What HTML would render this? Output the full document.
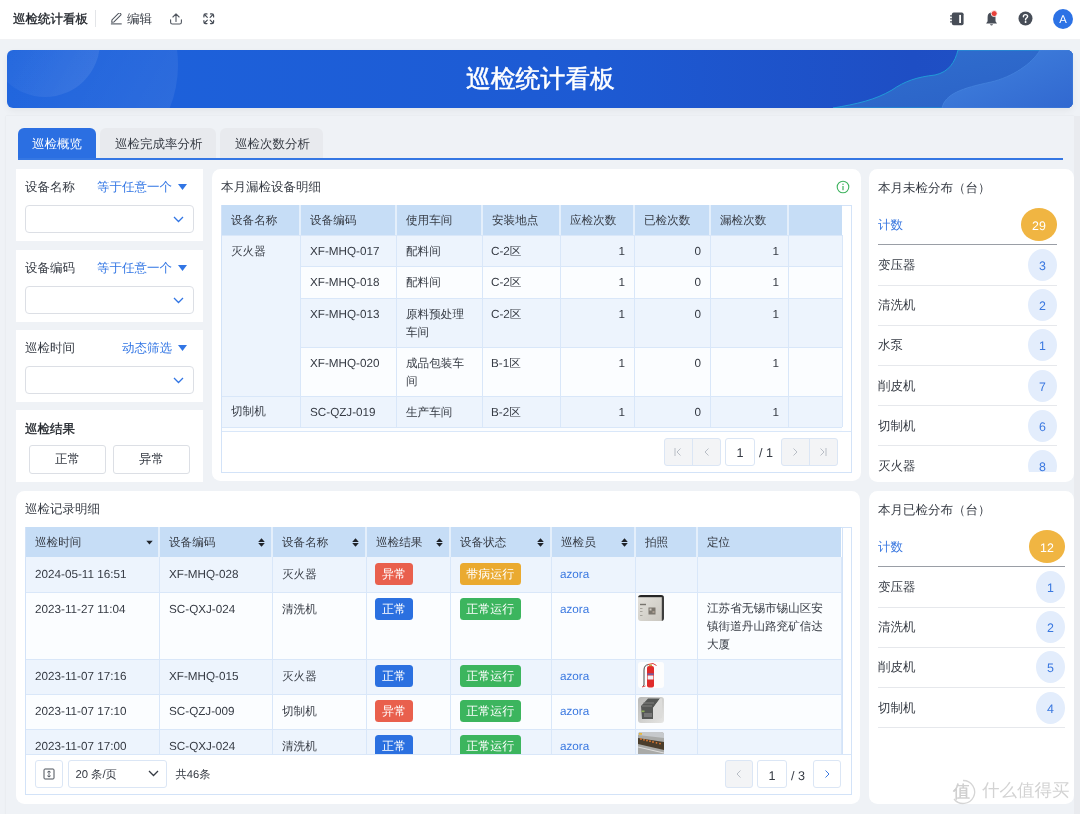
<!DOCTYPE html>
<html><head><meta charset="utf-8">
<style>
*{box-sizing:border-box;margin:0;padding:0}
html,body{width:1080px;height:814px;overflow:hidden}
body{background:#eff2f6;font-family:"Liberation Sans",sans-serif;text-rendering:geometricPrecision;color:#363b44;font-size:12px;position:relative}
.abs{position:absolute}
.t{position:absolute;white-space:nowrap;line-height:1}
.n{font-size:11.7px}
.panel{position:absolute;background:#fff;border-radius:8.5px}
.svg{position:absolute;line-height:0}
#root{position:absolute;left:0;top:0;width:1080px;height:814px;will-change:transform}
</style></head><body><div id="root">

<div class="abs" style="left:0px;top:0px;width:1080px;height:40px;background:#fff;border-bottom:1px solid #f1f2f4"></div>
<div class="t" style="left:13px;top:13px;font-size:12.5px;color:#1f2329;-webkit-text-stroke:0.35px #1f2329">巡检统计看板</div>
<div class="abs" style="left:95px;top:10px;width:1px;height:17px;background:#e3e5e8"></div>
<svg class="svg" style="left:110px;top:13px" width="12" height="12" viewBox="0 0 12 12"><path transform="translate(0.3,-0.6)" d="M1.7 7.5 L8.4 0.8 Q9.1 0.2 9.8 0.8 L10.4 1.4 Q11 2.1 10.4 2.8 L3.7 9.5 L1.4 9.9 Z" fill="none" stroke="#50565f" stroke-width="1.05" stroke-linejoin="round"/><path d="M0.9 10.9 H11.7" stroke="#50565f" stroke-width="1.1"/></svg>
<div class="t" style="left:127px;top:13px;font-size:12.5px;color:#363b44;">编辑</div>
<svg class="svg" style="left:170px;top:12.5px" width="12" height="12" viewBox="0 0 12 12"><path d="M0.6 6.8 V9.2 Q0.6 11 2.4 11 H9.6 Q11.4 11 11.4 9.2 V6.8 M6 8.4 V1.1 M2.9 4.0 L6 0.9 L9.1 4.0" fill="none" stroke="#50565f" stroke-width="1.1" stroke-linecap="round" stroke-linejoin="round"/></svg>
<svg class="svg" style="left:202.5px;top:12.8px" width="12" height="12" viewBox="0 0 12 12"><path d="M0.9 4.0 V2.6 Q0.9 0.9 2.6 0.9 H4.0 M7.5 0.9 H8.9 Q10.6 0.9 10.6 2.6 V4.0 M10.6 7.5 V8.9 Q10.6 10.6 8.9 10.6 H7.5 M4.0 10.6 H2.6 Q0.9 10.6 0.9 8.9 V7.5 M1.5 1.5 L4.3 4.3 M10 1.5 L7.2 4.3 M10 10 L7.2 7.2 M1.5 10 L4.3 7.2" fill="none" stroke="#474d57" stroke-width="1.2" stroke-linecap="round"/></svg>
<svg class="svg" style="left:950px;top:11.5px" width="14" height="14" viewBox="0 0 14 14"><rect x="1.9" y="0.4" width="11.7" height="12.8" rx="1.8" fill="#474d57"/><rect x="9.2" y="2.9" width="1.8" height="8.1" fill="#fff"/><path d="M0.4 3.9H2.5 M0.4 6.9H2.5 M0.4 9.9H2.5" stroke="#474d57" stroke-width="1.1" stroke-linecap="round"/></svg>
<svg class="svg" style="left:985px;top:10px" width="14" height="17" viewBox="0 0 14 17"><path d="M6.2 2.6 C3.6 2.8 2.6 4.9 2.6 7.4 V11.3 L1.1 13.6 H12 L10.5 11.3 V7.4 C10.5 4.9 9.2 2.7 6.8 2.6Z" fill="#474d57"/><path d="M4.9 14.2 Q6.5 16.6 8.1 14.2Z" fill="#474d57"/><circle cx="9.2" cy="3.6" r="3" fill="#e8403a" stroke="#fff" stroke-width="0.8"/></svg>
<svg class="svg" style="left:1018px;top:11px" width="15" height="15" viewBox="0 0 15 15"><circle cx="7.5" cy="7.5" r="7" fill="#474d57"/><path d="M5.4 5.7 C5.4 4.3 6.3 3.6 7.5 3.6 C8.8 3.6 9.6 4.4 9.6 5.5 C9.6 6.8 8 7.1 7.6 8.2 V8.9" fill="none" stroke="#fff" stroke-width="1.4" stroke-linecap="round"/><circle cx="7.6" cy="11" r="0.95" fill="#fff"/></svg>
<div class="abs" style="left:1053px;top:9px;width:20px;height:20px;background:#2c72e5;border-radius:50%"></div>
<div class="t" style="left:1053px;top:14.7px;font-size:11.3px;color:#fff;width:20px;text-align:center">A</div>
<div class="abs" style="left:7px;top:50px;width:1066px;height:58px;border-radius:6px;overflow:hidden;background:linear-gradient(90deg,#1d63dd 0%,#1d5ad3 55%,#1e4ec4 85%,#2152c6 100%);box-shadow:0 3px 7px rgba(0,0,0,0.05)">
 <svg class="svg" style="left:0;top:0" width="1066" height="58" viewBox="0 0 1066 58">
  <defs><linearGradient id="c1" x1="0" y1="0.2" x2="1" y2="0.8"><stop offset="0" stop-color="#fff" stop-opacity="0"/><stop offset="1" stop-color="#fff" stop-opacity="0.09"/></linearGradient><linearGradient id="c2" x1="0" y1="0" x2="1" y2="0.6"><stop offset="0.3" stop-color="#fff" stop-opacity="0"/><stop offset="1" stop-color="#fff" stop-opacity="0.07"/></linearGradient></defs>
  <circle cx="38" cy="-8" r="55" fill="url(#c1)"/>
  <circle cx="55" cy="15" r="116" fill="url(#c2)"/>
  <defs><linearGradient id="w1" x1="0" y1="0" x2="1" y2="1"><stop offset="0" stop-color="#3170cf"/><stop offset="1" stop-color="#2a60c6"/></linearGradient><linearGradient id="w2" x1="0" y1="0" x2="1" y2="1"><stop offset="0" stop-color="#4283de"/><stop offset="1" stop-color="#3168d0"/></linearGradient></defs>
  <path d="M826 58 C850 54 868 50 885 40 C898 31 910 27 928 25 C942 22 948 12 951 0 H1066 V58Z" fill="url(#w1)" stroke="#20a2d9" stroke-width="0.9"/>
  <path d="M935 58 C938 44 955 38 984 32 C1005 27 1025 14 1033 0 H1066 V58Z" fill="url(#w2)" stroke="#4a8ae0" stroke-width="0.6"/>
 </svg>
</div>
<div class="t" style="left:466px;top:68px;font-size:24.8px;color:#fff;-webkit-text-stroke:0.5px #fff">巡检统计看板</div>
<div class="abs" style="left:6px;top:116px;width:1068px;height:700px;background:#eff2f6;box-shadow:0 0 2px rgba(0,0,0,0.07)"></div>
<div class="abs" style="left:1074px;top:116px;width:6px;height:698px;background:#e9ebef"></div>
<div class="abs" style="left:18px;top:128px;width:78px;height:30px;background:#2b6fe2;border-radius:6px 6px 0 0"></div>
<div class="t" style="left:32px;top:138px;font-size:12.5px;color:#fff;">巡检概览</div>
<div class="abs" style="left:100px;top:128px;width:116px;height:30px;background:#e8eaee;border-radius:6px 6px 0 0"></div>
<div class="t" style="left:115px;top:138px;font-size:12.5px;color:#363b44;">巡检完成率分析</div>
<div class="abs" style="left:220px;top:128px;width:103px;height:30px;background:#e8eaee;border-radius:6px 6px 0 0"></div>
<div class="t" style="left:235px;top:138px;font-size:12.5px;color:#363b44;">巡检次数分析</div>
<div class="abs" style="left:18px;top:158px;width:1045px;height:2px;background:#3577e3"></div>
<div class="abs" style="left:16px;top:169px;width:187px;height:72px;background:#fff"></div>
<div class="t" style="left:25px;top:181px;font-size:12.5px;color:#363b44;">设备名称</div>
<div class="t" style="left:97px;top:181px;font-size:12.5px;color:#3175e4;">等于任意一个</div>
<div class="svg" style="left:178px;top:184px"><svg width="9" height="6" viewBox="0 0 9 6"><path d="M0 0 H9 L4.5 6Z" fill="#3175e4"/></svg></div>
<div class="abs" style="left:25px;top:205px;width:169px;height:28px;background:#fff;border:1px solid #dcdfe5;border-radius:4px"></div>
<div class="svg" style="left:173px;top:216px"><svg width="11" height="7" viewBox="0 0 11 7"><path d="M1 1 L5.5 5.5 L10 1" fill="none" stroke="#3175e4" stroke-width="1.3"/></svg></div>
<div class="abs" style="left:16px;top:249.5px;width:187px;height:72px;background:#fff"></div>
<div class="t" style="left:25px;top:261.5px;font-size:12.5px;color:#363b44;">设备编码</div>
<div class="t" style="left:97px;top:261.5px;font-size:12.5px;color:#3175e4;">等于任意一个</div>
<div class="svg" style="left:178px;top:264.5px"><svg width="9" height="6" viewBox="0 0 9 6"><path d="M0 0 H9 L4.5 6Z" fill="#3175e4"/></svg></div>
<div class="abs" style="left:25px;top:285.5px;width:169px;height:28px;background:#fff;border:1px solid #dcdfe5;border-radius:4px"></div>
<div class="svg" style="left:173px;top:296.5px"><svg width="11" height="7" viewBox="0 0 11 7"><path d="M1 1 L5.5 5.5 L10 1" fill="none" stroke="#3175e4" stroke-width="1.3"/></svg></div>
<div class="abs" style="left:16px;top:330px;width:187px;height:72px;background:#fff"></div>
<div class="t" style="left:25px;top:342px;font-size:12.5px;color:#363b44;">巡检时间</div>
<div class="t" style="left:122px;top:342px;font-size:12.5px;color:#3175e4;">动态筛选</div>
<div class="svg" style="left:178px;top:345px"><svg width="9" height="6" viewBox="0 0 9 6"><path d="M0 0 H9 L4.5 6Z" fill="#3175e4"/></svg></div>
<div class="abs" style="left:25px;top:366px;width:169px;height:28px;background:#fff;border:1px solid #dcdfe5;border-radius:4px"></div>
<div class="svg" style="left:173px;top:377px"><svg width="11" height="7" viewBox="0 0 11 7"><path d="M1 1 L5.5 5.5 L10 1" fill="none" stroke="#3175e4" stroke-width="1.3"/></svg></div>
<div class="abs" style="left:16px;top:410px;width:187px;height:72px;background:#fff"></div>
<div class="t" style="left:25px;top:423px;font-size:12.5px;color:#1f2329;-webkit-text-stroke:0.35px #1f2329">巡检结果</div>
<div class="abs" style="left:29px;top:445px;width:77px;height:29px;background:#fff;border:1px solid #dcdfe5;border-radius:3px"></div>
<div class="t" style="left:29px;top:453px;font-size:12.5px;color:#363b44;width:77px;text-align:center">正常</div>
<div class="abs" style="left:113px;top:445px;width:77px;height:29px;background:#fff;border:1px solid #dcdfe5;border-radius:3px"></div>
<div class="t" style="left:113px;top:453px;font-size:12.5px;color:#363b44;width:77px;text-align:center">异常</div>
<div class="panel" style="left:212px;top:169px;width:649px;height:312px"></div>
<div class="panel" style="left:869px;top:169px;width:205px;height:313px"></div>
<div class="panel" style="left:16px;top:491px;width:844px;height:313px"></div>
<div class="panel" style="left:869px;top:491px;width:205px;height:313px"></div>
<div class="t" style="left:221px;top:181px;font-size:12.5px;color:#363b44;">本月漏检设备明细</div>
<svg class="svg" style="left:836px;top:180px" width="14" height="14" viewBox="0 0 14 14"><circle cx="7" cy="7" r="5.8" fill="none" stroke="#3fb35f" stroke-width="1.1"/><rect x="6.4" y="6" width="1.2" height="4.2" fill="#3fb35f"/><circle cx="7" cy="4.3" r="0.75" fill="#3fb35f"/></svg>
<div class="abs" style="left:221px;top:205px;width:621px;height:30px;background:#c6ddf6"></div>
<div class="t" style="left:231px;top:215px;font-size:11.6px;color:#363b44;">设备名称</div>
<div class="t" style="left:310px;top:215px;font-size:11.6px;color:#363b44;">设备编码</div>
<div class="t" style="left:406px;top:215px;font-size:11.6px;color:#363b44;">使用车间</div>
<div class="t" style="left:492px;top:215px;font-size:11.6px;color:#363b44;">安装地点</div>
<div class="t" style="left:570px;top:215px;font-size:11.6px;color:#363b44;">应检次数</div>
<div class="t" style="left:644px;top:215px;font-size:11.6px;color:#363b44;">已检次数</div>
<div class="t" style="left:720px;top:215px;font-size:11.6px;color:#363b44;">漏检次数</div>
<div class="abs" style="left:300px;top:235px;width:542px;height:31px;background:#edf4fd"></div>
<div class="abs" style="left:300px;top:266px;width:542px;height:32px;background:#fbfdff"></div>
<div class="abs" style="left:300px;top:298px;width:542px;height:49px;background:#edf4fd"></div>
<div class="abs" style="left:300px;top:347px;width:542px;height:49px;background:#fbfdff"></div>
<div class="abs" style="left:300px;top:396px;width:542px;height:31px;background:#edf4fd"></div>
<div class="abs" style="left:300px;top:427px;width:542px;height:4px;background:#fbfdff"></div>
<div class="abs" style="left:221px;top:235px;width:79px;height:161px;background:#edf4fd"></div>
<div class="abs" style="left:221px;top:396px;width:79px;height:31px;background:#edf4fd"></div>
<div class="abs" style="left:221px;top:427px;width:79px;height:4px;background:#fbfdff"></div>
<div class="t" style="left:231px;top:246px;font-size:11.6px;color:#363b44;">灭火器</div>
<div class="t" style="left:231px;top:406px;font-size:11.6px;color:#363b44;">切制机</div>
<div class="t" style="left:310px;top:246px;font-size:11.7px;color:#363b44;"><span class="n">XF-MHQ-017</span></div>
<div class="t" style="left:406px;top:243.3px;font-size:11.6px;line-height:17.3px;white-space:nowrap">配料间</div>
<div class="t" style="left:491px;top:246px;font-size:11.6px;color:#363b44;"><span class="n">C-2</span>区</div>
<div class="t" style="left:560px;top:246px;font-size:11.7px;color:#363b44;width:74px;text-align:right;padding-right:9px"><span class="n">1</span></div>
<div class="t" style="left:634px;top:246px;font-size:11.7px;color:#363b44;width:76px;text-align:right;padding-right:9px"><span class="n">0</span></div>
<div class="t" style="left:710px;top:246px;font-size:11.7px;color:#363b44;width:78px;text-align:right;padding-right:9px"><span class="n">1</span></div>
<div class="t" style="left:310px;top:277px;font-size:11.7px;color:#363b44;"><span class="n">XF-MHQ-018</span></div>
<div class="t" style="left:406px;top:274.3px;font-size:11.6px;line-height:17.3px;white-space:nowrap">配料间</div>
<div class="t" style="left:491px;top:277px;font-size:11.6px;color:#363b44;"><span class="n">C-2</span>区</div>
<div class="t" style="left:560px;top:277px;font-size:11.7px;color:#363b44;width:74px;text-align:right;padding-right:9px"><span class="n">1</span></div>
<div class="t" style="left:634px;top:277px;font-size:11.7px;color:#363b44;width:76px;text-align:right;padding-right:9px"><span class="n">0</span></div>
<div class="t" style="left:710px;top:277px;font-size:11.7px;color:#363b44;width:78px;text-align:right;padding-right:9px"><span class="n">1</span></div>
<div class="t" style="left:310px;top:309px;font-size:11.7px;color:#363b44;"><span class="n">XF-MHQ-013</span></div>
<div class="t" style="left:406px;top:306.3px;font-size:11.6px;line-height:17.3px;white-space:nowrap">原料预处理<br>车间</div>
<div class="t" style="left:491px;top:309px;font-size:11.6px;color:#363b44;"><span class="n">C-2</span>区</div>
<div class="t" style="left:560px;top:309px;font-size:11.7px;color:#363b44;width:74px;text-align:right;padding-right:9px"><span class="n">1</span></div>
<div class="t" style="left:634px;top:309px;font-size:11.7px;color:#363b44;width:76px;text-align:right;padding-right:9px"><span class="n">0</span></div>
<div class="t" style="left:710px;top:309px;font-size:11.7px;color:#363b44;width:78px;text-align:right;padding-right:9px"><span class="n">1</span></div>
<div class="t" style="left:310px;top:358px;font-size:11.7px;color:#363b44;"><span class="n">XF-MHQ-020</span></div>
<div class="t" style="left:406px;top:355.3px;font-size:11.6px;line-height:17.3px;white-space:nowrap">成品包装车<br>间</div>
<div class="t" style="left:491px;top:358px;font-size:11.6px;color:#363b44;"><span class="n">B-1</span>区</div>
<div class="t" style="left:560px;top:358px;font-size:11.7px;color:#363b44;width:74px;text-align:right;padding-right:9px"><span class="n">1</span></div>
<div class="t" style="left:634px;top:358px;font-size:11.7px;color:#363b44;width:76px;text-align:right;padding-right:9px"><span class="n">0</span></div>
<div class="t" style="left:710px;top:358px;font-size:11.7px;color:#363b44;width:78px;text-align:right;padding-right:9px"><span class="n">1</span></div>
<div class="t" style="left:310px;top:407px;font-size:11.7px;color:#363b44;"><span class="n">SC-QZJ-019</span></div>
<div class="t" style="left:406px;top:404.3px;font-size:11.6px;line-height:17.3px;white-space:nowrap">生产车间</div>
<div class="t" style="left:491px;top:407px;font-size:11.6px;color:#363b44;"><span class="n">B-2</span>区</div>
<div class="t" style="left:560px;top:407px;font-size:11.7px;color:#363b44;width:74px;text-align:right;padding-right:9px"><span class="n">1</span></div>
<div class="t" style="left:634px;top:407px;font-size:11.7px;color:#363b44;width:76px;text-align:right;padding-right:9px"><span class="n">0</span></div>
<div class="t" style="left:710px;top:407px;font-size:11.7px;color:#363b44;width:78px;text-align:right;padding-right:9px"><span class="n">1</span></div>
<div class="abs" style="left:842px;top:205px;width:10px;height:1px;background:#d3e3f8"></div>
<div class="abs" style="left:299px;top:205px;width:2px;height:30px;background:#e4effb"></div>
<div class="abs" style="left:299.5px;top:235px;width:1px;height:192px;background:#d9e7f9"></div>
<div class="abs" style="left:395px;top:205px;width:2px;height:30px;background:#e4effb"></div>
<div class="abs" style="left:395.5px;top:235px;width:1px;height:192px;background:#d9e7f9"></div>
<div class="abs" style="left:481px;top:205px;width:2px;height:30px;background:#e4effb"></div>
<div class="abs" style="left:481.5px;top:235px;width:1px;height:192px;background:#d9e7f9"></div>
<div class="abs" style="left:559px;top:205px;width:2px;height:30px;background:#e4effb"></div>
<div class="abs" style="left:559.5px;top:235px;width:1px;height:192px;background:#d9e7f9"></div>
<div class="abs" style="left:633px;top:205px;width:2px;height:30px;background:#e4effb"></div>
<div class="abs" style="left:633.5px;top:235px;width:1px;height:192px;background:#d9e7f9"></div>
<div class="abs" style="left:709px;top:205px;width:2px;height:30px;background:#e4effb"></div>
<div class="abs" style="left:709.5px;top:235px;width:1px;height:192px;background:#d9e7f9"></div>
<div class="abs" style="left:787px;top:205px;width:2px;height:30px;background:#e4effb"></div>
<div class="abs" style="left:787.5px;top:235px;width:1px;height:192px;background:#d9e7f9"></div>
<div class="abs" style="left:841.5px;top:235px;width:1px;height:192px;background:#d9e7f9"></div>
<div class="abs" style="left:221px;top:234.5px;width:621px;height:1px;background:#d9e7f9"></div>
<div class="abs" style="left:300px;top:265.5px;width:542px;height:1px;background:#d9e7f9"></div>
<div class="abs" style="left:300px;top:297.5px;width:542px;height:1px;background:#d9e7f9"></div>
<div class="abs" style="left:300px;top:346.5px;width:542px;height:1px;background:#d9e7f9"></div>
<div class="abs" style="left:221px;top:395.5px;width:621px;height:1px;background:#d9e7f9"></div>
<div class="abs" style="left:221px;top:426.5px;width:621px;height:1px;background:#d9e7f9"></div>
<div class="abs" style="left:221px;top:430.5px;width:631px;height:1px;background:#d9e7f9"></div>
<div class="abs" style="left:221px;top:205px;width:631px;height:268px;border:1px solid #d3e3f8;border-top:none;background:transparent"></div>
<div class="abs" style="left:221px;top:205px;width:1px;height:268px;background:#d3e3f8"></div>
<div class="abs" style="left:664px;top:438px;width:57px;height:28px;background:#f3f4f6;border:1px solid #dbe6f5;border-radius:3px"></div>
<div class="abs" style="left:692px;top:439px;width:1px;height:26px;background:#dbe6f5"></div>
<div class="abs" style="left:781px;top:438px;width:57px;height:28px;background:#f3f4f6;border:1px solid #dbe6f5;border-radius:3px"></div>
<div class="abs" style="left:809px;top:439px;width:1px;height:26px;background:#dbe6f5"></div>
<div class="abs" style="left:725px;top:438px;width:30px;height:28px;background:#fff;border:1px solid #dbe6f5;border-radius:3px"></div>
<div class="t" style="left:725px;top:447px;font-size:12.6px;color:#363b44;width:30px;text-align:center"><span>1</span></div>
<div class="t" style="left:759px;top:447px;font-size:12.6px;color:#363b44;"><span>/ 1</span></div>
<svg class="svg" style="left:673px;top:447px" width="10" height="10" viewBox="0 0 10 10"><path d="M2 1V9 M7.5 1.5 L4 5 L7.5 8.5" fill="none" stroke="#b9bec6" stroke-width="1"/></svg>
<svg class="svg" style="left:702px;top:447px" width="10" height="10" viewBox="0 0 10 10"><path d="M6.5 1.5 L3 5 L6.5 8.5" fill="none" stroke="#b9bec6" stroke-width="1"/></svg>
<svg class="svg" style="left:790px;top:447px" width="10" height="10" viewBox="0 0 10 10"><path d="M3.5 1.5 L7 5 L3.5 8.5" fill="none" stroke="#b9bec6" stroke-width="1"/></svg>
<svg class="svg" style="left:818px;top:447px" width="10" height="10" viewBox="0 0 10 10"><path d="M8 1V9 M2.5 1.5 L6 5 L2.5 8.5" fill="none" stroke="#b9bec6" stroke-width="1"/></svg>
<div class="t" style="left:878px;top:182px;font-size:12.5px;color:#363b44;">本月未检分布（台）</div>
<div class="t" style="left:878px;top:219px;font-size:12.5px;color:#3a78e0;">计数</div>
<div class="abs" style="left:1021px;top:208px;width:36px;height:32.5px;background:#f0b542;border-radius:50%"></div>
<div class="t" style="left:1021px;top:219.5px;font-size:12.4px;color:#fff;width:36px;text-align:center"><span>29</span></div>
<div class="abs" style="left:878px;top:244px;width:179px;height:1px;background:#9a9ea6"></div>
<div class="abs" style="left:870px;top:245px;width:200px;height:227px;overflow:hidden">
<div class="t" style="left:8px;top:14.0px;font-size:12.5px;color:#363b44">变压器</div>
<div class="abs" style="left:158px;top:4.0px;width:29px;height:32px;background:#e3edfc;border-radius:50%"></div>
<div class="t" style="left:158px;top:15.0px;width:29px;text-align:center;font-size:12.4px;color:#3a78e0">3</div>
<div class="abs" style="left:8px;top:39.5px;width:179px;height:1px;background:#e6e8ec"></div>
<div class="t" style="left:8px;top:54.2px;font-size:12.5px;color:#363b44">清洗机</div>
<div class="abs" style="left:158px;top:44.2px;width:29px;height:32px;background:#e3edfc;border-radius:50%"></div>
<div class="t" style="left:158px;top:55.2px;width:29px;text-align:center;font-size:12.4px;color:#3a78e0">2</div>
<div class="abs" style="left:8px;top:79.7px;width:179px;height:1px;background:#e6e8ec"></div>
<div class="t" style="left:8px;top:94.4px;font-size:12.5px;color:#363b44">水泵</div>
<div class="abs" style="left:158px;top:84.4px;width:29px;height:32px;background:#e3edfc;border-radius:50%"></div>
<div class="t" style="left:158px;top:95.4px;width:29px;text-align:center;font-size:12.4px;color:#3a78e0">1</div>
<div class="abs" style="left:8px;top:119.9px;width:179px;height:1px;background:#e6e8ec"></div>
<div class="t" style="left:8px;top:134.60000000000002px;font-size:12.5px;color:#363b44">削皮机</div>
<div class="abs" style="left:158px;top:124.60000000000001px;width:29px;height:32px;background:#e3edfc;border-radius:50%"></div>
<div class="t" style="left:158px;top:135.60000000000002px;width:29px;text-align:center;font-size:12.4px;color:#3a78e0">7</div>
<div class="abs" style="left:8px;top:160.10000000000002px;width:179px;height:1px;background:#e6e8ec"></div>
<div class="t" style="left:8px;top:174.8px;font-size:12.5px;color:#363b44">切制机</div>
<div class="abs" style="left:158px;top:164.8px;width:29px;height:32px;background:#e3edfc;border-radius:50%"></div>
<div class="t" style="left:158px;top:175.8px;width:29px;text-align:center;font-size:12.4px;color:#3a78e0">6</div>
<div class="abs" style="left:8px;top:200.3px;width:179px;height:1px;background:#e6e8ec"></div>
<div class="t" style="left:8px;top:215.0px;font-size:12.5px;color:#363b44">灭火器</div>
<div class="abs" style="left:158px;top:205.0px;width:29px;height:32px;background:#e3edfc;border-radius:50%"></div>
<div class="t" style="left:158px;top:216.0px;width:29px;text-align:center;font-size:12.4px;color:#3a78e0">8</div>
<div class="abs" style="left:8px;top:240.5px;width:179px;height:1px;background:#e6e8ec"></div>
</div>
<div class="t" style="left:878px;top:504px;font-size:12.5px;color:#363b44;">本月已检分布（台）</div>
<div class="t" style="left:878px;top:541px;font-size:12.5px;color:#3a78e0;">计数</div>
<div class="abs" style="left:1029px;top:530px;width:36px;height:32.5px;background:#f0b542;border-radius:50%"></div>
<div class="t" style="left:1029px;top:541.5px;font-size:12.4px;color:#fff;width:36px;text-align:center"><span>12</span></div>
<div class="abs" style="left:878px;top:566px;width:187px;height:1px;background:#9a9ea6"></div>
<div class="abs" style="left:870px;top:567px;width:200px;height:233px;overflow:hidden">
<div class="t" style="left:8px;top:14.0px;font-size:12.5px;color:#363b44">变压器</div>
<div class="abs" style="left:166px;top:4.0px;width:29px;height:32px;background:#e3edfc;border-radius:50%"></div>
<div class="t" style="left:166px;top:15.0px;width:29px;text-align:center;font-size:12.4px;color:#3a78e0">1</div>
<div class="abs" style="left:8px;top:39.5px;width:187px;height:1px;background:#e6e8ec"></div>
<div class="t" style="left:8px;top:54.2px;font-size:12.5px;color:#363b44">清洗机</div>
<div class="abs" style="left:166px;top:44.2px;width:29px;height:32px;background:#e3edfc;border-radius:50%"></div>
<div class="t" style="left:166px;top:55.2px;width:29px;text-align:center;font-size:12.4px;color:#3a78e0">2</div>
<div class="abs" style="left:8px;top:79.7px;width:187px;height:1px;background:#e6e8ec"></div>
<div class="t" style="left:8px;top:94.4px;font-size:12.5px;color:#363b44">削皮机</div>
<div class="abs" style="left:166px;top:84.4px;width:29px;height:32px;background:#e3edfc;border-radius:50%"></div>
<div class="t" style="left:166px;top:95.4px;width:29px;text-align:center;font-size:12.4px;color:#3a78e0">5</div>
<div class="abs" style="left:8px;top:119.9px;width:187px;height:1px;background:#e6e8ec"></div>
<div class="t" style="left:8px;top:134.60000000000002px;font-size:12.5px;color:#363b44">切制机</div>
<div class="abs" style="left:166px;top:124.60000000000001px;width:29px;height:32px;background:#e3edfc;border-radius:50%"></div>
<div class="t" style="left:166px;top:135.60000000000002px;width:29px;text-align:center;font-size:12.4px;color:#3a78e0">4</div>
<div class="abs" style="left:8px;top:160.10000000000002px;width:187px;height:1px;background:#e6e8ec"></div>
</div>
<div class="t" style="left:25px;top:503px;font-size:12.5px;color:#363b44;">巡检记录明细</div>
<div class="abs" style="left:25px;top:527px;width:816px;height:30px;background:#c6ddf6"></div>
<div class="t" style="left:35px;top:537px;font-size:11.6px;color:#363b44;">巡检时间</div>
<div class="t" style="left:169px;top:537px;font-size:11.6px;color:#363b44;">设备编码</div>
<div class="t" style="left:282px;top:537px;font-size:11.6px;color:#363b44;">设备名称</div>
<div class="t" style="left:376px;top:537px;font-size:11.6px;color:#363b44;">巡检结果</div>
<div class="t" style="left:460px;top:537px;font-size:11.6px;color:#363b44;">设备状态</div>
<div class="t" style="left:561px;top:537px;font-size:11.6px;color:#363b44;">巡检员</div>
<div class="t" style="left:645px;top:537px;font-size:11.6px;color:#363b44;">拍照</div>
<div class="t" style="left:707px;top:537px;font-size:11.6px;color:#363b44;">定位</div>
<svg class="svg" style="left:258px;top:537.8px" width="7" height="9" viewBox="0 0 7 9"><path d="M0.2 3.9 L3.5 0.2 L6.8 3.9Z M0.2 5.0 L3.5 8.7 L6.8 5.0Z" fill="#1f2329"/></svg>
<svg class="svg" style="left:352px;top:537.8px" width="7" height="9" viewBox="0 0 7 9"><path d="M0.2 3.9 L3.5 0.2 L6.8 3.9Z M0.2 5.0 L3.5 8.7 L6.8 5.0Z" fill="#1f2329"/></svg>
<svg class="svg" style="left:436px;top:537.8px" width="7" height="9" viewBox="0 0 7 9"><path d="M0.2 3.9 L3.5 0.2 L6.8 3.9Z M0.2 5.0 L3.5 8.7 L6.8 5.0Z" fill="#1f2329"/></svg>
<svg class="svg" style="left:537px;top:537.8px" width="7" height="9" viewBox="0 0 7 9"><path d="M0.2 3.9 L3.5 0.2 L6.8 3.9Z M0.2 5.0 L3.5 8.7 L6.8 5.0Z" fill="#1f2329"/></svg>
<svg class="svg" style="left:621px;top:537.8px" width="7" height="9" viewBox="0 0 7 9"><path d="M0.2 3.9 L3.5 0.2 L6.8 3.9Z M0.2 5.0 L3.5 8.7 L6.8 5.0Z" fill="#1f2329"/></svg>
<svg class="svg" style="left:146px;top:540px" width="7" height="6" viewBox="0 0 7 6"><path d="M0.3 0.8 H6.7 L3.5 4.6Z" fill="#1f2329"/></svg>
<div class="abs" style="left:25px;top:557px;width:816px;height:197px;overflow:hidden">
<div class="abs" style="left:0;top:0px;width:816px;height:35px;background:#edf4fd"></div>
<div class="t" style="left:10px;top:12px;font-size:11.7px">2024-05-11 16:51</div>
<div class="t" style="left:144px;top:12px;font-size:11.7px">XF-MHQ-028</div>
<div class="t" style="left:257px;top:12px;font-size:11.6px">灭火器</div>
<div class="t" style="left:350.3px;top:6px;height:21.5px;line-height:23.6px;padding:0 6.8px;border-radius:3.5px;background:#e9604d;color:#fff;font-size:12px">异常</div>
<div class="t" style="left:434.5px;top:6px;height:21.5px;line-height:23.6px;padding:0 6.8px;border-radius:3.5px;background:#eaaa30;color:#fff;font-size:12px">带病运行</div>
<div class="t" style="left:535px;top:12px;font-size:11.7px;color:#3a78e0">azora</div>
<div class="abs" style="left:0;top:35px;width:816px;height:67px;background:#fbfdff"></div>
<div class="t" style="left:10px;top:47px;font-size:11.7px">2023-11-27 11:04</div>
<div class="t" style="left:144px;top:47px;font-size:11.7px">SC-QXJ-024</div>
<div class="t" style="left:257px;top:47px;font-size:11.6px">清洗机</div>
<div class="t" style="left:350.3px;top:41px;height:21.5px;line-height:23.6px;padding:0 6.8px;border-radius:3.5px;background:#2b70e0;color:#fff;font-size:12px">正常</div>
<div class="t" style="left:434.5px;top:41px;height:21.5px;line-height:23.6px;padding:0 6.8px;border-radius:3.5px;background:#3cb55e;color:#fff;font-size:12px">正常运行</div>
<div class="t" style="left:535px;top:47px;font-size:11.7px;color:#3a78e0">azora</div>
<div class="t" style="left:682px;top:42.5px;font-size:11.6px;line-height:18px">江苏省无锡市锡山区安<br>镇街道丹山路兖矿信达<br>大厦</div>
<div class="abs" style="left:0;top:102px;width:816px;height:35px;background:#edf4fd"></div>
<div class="t" style="left:10px;top:114px;font-size:11.7px">2023-11-07 17:16</div>
<div class="t" style="left:144px;top:114px;font-size:11.7px">XF-MHQ-015</div>
<div class="t" style="left:257px;top:114px;font-size:11.6px">灭火器</div>
<div class="t" style="left:350.3px;top:108px;height:21.5px;line-height:23.6px;padding:0 6.8px;border-radius:3.5px;background:#2b70e0;color:#fff;font-size:12px">正常</div>
<div class="t" style="left:434.5px;top:108px;height:21.5px;line-height:23.6px;padding:0 6.8px;border-radius:3.5px;background:#3cb55e;color:#fff;font-size:12px">正常运行</div>
<div class="t" style="left:535px;top:114px;font-size:11.7px;color:#3a78e0">azora</div>
<div class="abs" style="left:0;top:137px;width:816px;height:35px;background:#fbfdff"></div>
<div class="t" style="left:10px;top:149px;font-size:11.7px">2023-11-07 17:10</div>
<div class="t" style="left:144px;top:149px;font-size:11.7px">SC-QZJ-009</div>
<div class="t" style="left:257px;top:149px;font-size:11.6px">切制机</div>
<div class="t" style="left:350.3px;top:143px;height:21.5px;line-height:23.6px;padding:0 6.8px;border-radius:3.5px;background:#e9604d;color:#fff;font-size:12px">异常</div>
<div class="t" style="left:434.5px;top:143px;height:21.5px;line-height:23.6px;padding:0 6.8px;border-radius:3.5px;background:#3cb55e;color:#fff;font-size:12px">正常运行</div>
<div class="t" style="left:535px;top:149px;font-size:11.7px;color:#3a78e0">azora</div>
<div class="abs" style="left:0;top:172px;width:816px;height:68px;background:#edf4fd"></div>
<div class="t" style="left:10px;top:184px;font-size:11.7px">2023-11-07 17:00</div>
<div class="t" style="left:144px;top:184px;font-size:11.7px">SC-QXJ-024</div>
<div class="t" style="left:257px;top:184px;font-size:11.6px">清洗机</div>
<div class="t" style="left:350.3px;top:178px;height:21.5px;line-height:23.6px;padding:0 6.8px;border-radius:3.5px;background:#2b70e0;color:#fff;font-size:12px">正常</div>
<div class="t" style="left:434.5px;top:178px;height:21.5px;line-height:23.6px;padding:0 6.8px;border-radius:3.5px;background:#3cb55e;color:#fff;font-size:12px">正常运行</div>
<div class="t" style="left:535px;top:184px;font-size:11.7px;color:#3a78e0">azora</div>
</div>
<div class="abs" style="left:841px;top:527px;width:10px;height:1px;background:#d3e3f8"></div>
<div class="abs" style="left:158px;top:527px;width:2px;height:30px;background:#e4effb"></div>
<div class="abs" style="left:158.5px;top:557px;width:1px;height:197px;background:#d9e7f9"></div>
<div class="abs" style="left:271px;top:527px;width:2px;height:30px;background:#e4effb"></div>
<div class="abs" style="left:271.5px;top:557px;width:1px;height:197px;background:#d9e7f9"></div>
<div class="abs" style="left:365px;top:527px;width:2px;height:30px;background:#e4effb"></div>
<div class="abs" style="left:365.5px;top:557px;width:1px;height:197px;background:#d9e7f9"></div>
<div class="abs" style="left:449px;top:527px;width:2px;height:30px;background:#e4effb"></div>
<div class="abs" style="left:449.5px;top:557px;width:1px;height:197px;background:#d9e7f9"></div>
<div class="abs" style="left:550px;top:527px;width:2px;height:30px;background:#e4effb"></div>
<div class="abs" style="left:550.5px;top:557px;width:1px;height:197px;background:#d9e7f9"></div>
<div class="abs" style="left:634px;top:527px;width:2px;height:30px;background:#e4effb"></div>
<div class="abs" style="left:634.5px;top:557px;width:1px;height:197px;background:#d9e7f9"></div>
<div class="abs" style="left:696px;top:527px;width:2px;height:30px;background:#e4effb"></div>
<div class="abs" style="left:696.5px;top:557px;width:1px;height:197px;background:#d9e7f9"></div>
<div class="abs" style="left:840.5px;top:557px;width:1px;height:197px;background:#d9e7f9"></div>
<div class="abs" style="left:25px;top:591.5px;width:816px;height:1px;background:#d9e7f9"></div>
<div class="abs" style="left:25px;top:658.5px;width:816px;height:1px;background:#d9e7f9"></div>
<div class="abs" style="left:25px;top:693.5px;width:816px;height:1px;background:#d9e7f9"></div>
<div class="abs" style="left:25px;top:728.5px;width:816px;height:1px;background:#d9e7f9"></div>
<div class="abs" style="left:25px;top:753.5px;width:826px;height:1px;background:#d9e7f9"></div>
<div class="abs" style="left:25px;top:527px;width:1px;height:268px;background:#d3e3f8"></div>
<div class="abs" style="left:850.5px;top:527px;width:1px;height:268px;background:#d3e3f8"></div>
<div class="abs" style="left:25px;top:794px;width:826px;height:1px;background:#d3e3f8"></div>
<div class="abs" style="left:841.5px;top:527px;width:1px;height:227px;background:#d3e3f8"></div>
<div class="abs" style="left:35px;top:760px;width:28px;height:28px;background:#fff;border:1px solid #dbe6f5;border-radius:3px"></div>
<svg class="svg" style="left:43px;top:768px" width="12" height="12" viewBox="0 0 12 12"><rect x="1" y="1" width="10" height="10" rx="1" fill="none" stroke="#4b5059" stroke-width="1"/><path d="M6 3V9 M4.3 4.3 L6 3 L7.7 4.3 M4.3 7.7 L6 9 L7.7 7.7" fill="none" stroke="#4b5059" stroke-width="0.9"/></svg>
<div class="abs" style="left:68px;top:760px;width:99px;height:28px;background:#fff;border:1px solid #dbe6f5;border-radius:3px"></div>
<div class="t" style="left:75.5px;top:769px;font-size:11.6px;color:#363b44;"><span style="font-size:11.3px">20</span><span style="font-size:11.3px;margin-left:3px">条/页</span></div>
<div class="svg" style="left:148px;top:770px"><svg width="11" height="7" viewBox="0 0 11 7"><path d="M1 1 L5.5 5.5 L10 1" fill="none" stroke="#363b44" stroke-width="1.3"/></svg></div>
<div class="t" style="left:175.5px;top:768.5px;font-size:11.6px;color:#363b44;"><span style="font-size:11.3px">共<span style="font-size:11.2px">46</span>条</span></div>
<div class="abs" style="left:725px;top:760px;width:28px;height:28px;background:#f3f4f6;border:1px solid #dbe6f5;border-radius:3px"></div>
<svg class="svg" style="left:734px;top:769px" width="10" height="10" viewBox="0 0 10 10"><path d="M6.5 1.5 L3 5 L6.5 8.5" fill="none" stroke="#b9bec6" stroke-width="1"/></svg>
<div class="abs" style="left:757px;top:760px;width:30px;height:28px;background:#fff;border:1px solid #dbe6f5;border-radius:3px"></div>
<div class="t" style="left:757px;top:769.5px;font-size:12.6px;color:#363b44;width:30px;text-align:center"><span>1</span></div>
<div class="t" style="left:791px;top:769.5px;font-size:12.6px;color:#363b44;"><span>/ 3</span></div>
<div class="abs" style="left:813px;top:760px;width:28px;height:28px;background:#fff;border:1px solid #dbe6f5;border-radius:3px"></div>
<svg class="svg" style="left:822px;top:769px" width="10" height="10" viewBox="0 0 10 10"><path d="M3.5 1.5 L7 5 L3.5 8.5" fill="none" stroke="#3a78e0" stroke-width="1"/></svg>
<svg class="svg" style="left:638px;top:595px" width="26" height="26" viewBox="0 0 26 26"><defs><linearGradient id="pg1" x1="0" y1="0" x2="1" y2="1"><stop offset="0" stop-color="#e4e2dc"/><stop offset="1" stop-color="#c9c6bf"/></linearGradient><clipPath id="cp1"><rect x="0" y="0" width="26" height="26" rx="3"/></clipPath></defs><g clip-path="url(#cp1)"><rect width="26" height="26" fill="url(#pg1)"/><rect width="26" height="2.2" fill="#262626"/><rect x="23.8" y="2" width="2.2" height="24" fill="#3d3d3d"/><rect x="2" y="8.8" width="6" height="1.4" fill="#77746e"/><rect x="2" y="13" width="2.5" height="0.8" fill="#99968f"/><rect x="2" y="16" width="2.5" height="0.8" fill="#99968f"/><rect x="2" y="20" width="2.5" height="0.8" fill="#99968f"/><rect x="10.5" y="12.5" width="7" height="7" fill="#7c776f"/><rect x="11.5" y="13.5" width="2" height="2" fill="#cfcac1"/><rect x="14.5" y="16" width="2" height="2" fill="#a89c90"/></g></svg>
<svg class="svg" style="left:638px;top:662px" width="26" height="26" viewBox="0 0 26 26"><rect width="26" height="26" rx="3" fill="#fdfdfd"/><path d="M10.5 2.6 Q6 3 6 8 V23 L5 24.5" fill="none" stroke="#333" stroke-width="0.9"/><rect x="9" y="4" width="7" height="21.5" rx="2" fill="#e02b2b"/><rect x="9.3" y="11.5" width="6.4" height="1.2" fill="#4a6fd0"/><rect x="9.6" y="13.5" width="5.8" height="4" fill="#f0f0f4"/><path d="M10 2.5 L15 1.5 L18.5 3.5" fill="none" stroke="#e23a3a" stroke-width="1"/><rect x="11" y="2.6" width="3" height="1.6" fill="#c9a640"/><path d="M4 25 L7.5 24" stroke="#e23a3a" stroke-width="0.9"/></svg>
<svg class="svg" style="left:638px;top:697px" width="26" height="26" viewBox="0 0 26 26"><defs><clipPath id="cp3"><rect x="0" y="0" width="26" height="26" rx="3"/></clipPath><linearGradient id="pg3" x1="0" y1="0" x2="1" y2="1"><stop offset="0" stop-color="#b9b9b7"/><stop offset="1" stop-color="#e6e6e4"/></linearGradient></defs><g clip-path="url(#cp3)"><rect width="26" height="26" fill="url(#pg3)"/><path d="M3 9 L10 1.5 H22 L15 11 V22 H4 Z" fill="#555755"/><path d="M15 11 L22 1.5 H24 V21 L15 22Z" fill="#dcdcda"/><path d="M5 6 H16 M4 9 H14" stroke="#8a8a88" stroke-width="0.8"/><rect x="3.5" y="13.5" width="3" height="1.6" fill="#8fb05a"/><rect x="6" y="16" width="8" height="4" fill="#777"/></g></svg>
<svg class="svg" style="left:638px;top:732px" width="26" height="22" viewBox="0 0 26 22"><defs><clipPath id="cp4"><rect x="0" y="0" width="26" height="26" rx="3"/></clipPath></defs><g clip-path="url(#cp4)"><rect width="26" height="22" fill="#a9aaa8"/><path d="M0 6 L26 10 V18 L0 12Z" fill="#4a3d2c"/><path d="M0 0 H26 V6 L0 3Z" fill="#c6c9cc"/><circle cx="3" cy="7" r="0.9" fill="#e07a30"/><circle cx="6" cy="7.8" r="0.9" fill="#e07a30"/><circle cx="9" cy="8.5" r="0.9" fill="#e07a30"/><circle cx="12" cy="9.2" r="0.9" fill="#e07a30"/><circle cx="15" cy="10" r="0.9" fill="#e07a30"/><circle cx="18.5" cy="10.8" r="0.9" fill="#e07a30"/><circle cx="22" cy="11.6" r="0.9" fill="#e07a30"/><path d="M0 15 L26 21" stroke="#ddd" stroke-width="1.2"/><rect x="1" y="1" width="3" height="1.8" fill="#e8b83a"/></g></svg>
<svg class="svg" style="left:950px;top:779px" width="26" height="26" viewBox="0 0 26 26"><path d="M13 1.5 A11.5 11.5 0 1 1 4 20" fill="none" stroke="#d5d5d5" stroke-width="1.3"/></svg>
<div class="t" style="left:953px;top:782.5px;font-size:17px;font-family:'Liberation Serif',serif;color:#d0d0d0;-webkit-text-stroke:0.3px #c8c8c8">值</div>
<div class="t" style="left:982px;top:782px;font-size:17.5px;font-family:'Liberation Serif',serif;color:#d3d3d3;letter-spacing:0px">什么值得买</div>
</div></body></html>
